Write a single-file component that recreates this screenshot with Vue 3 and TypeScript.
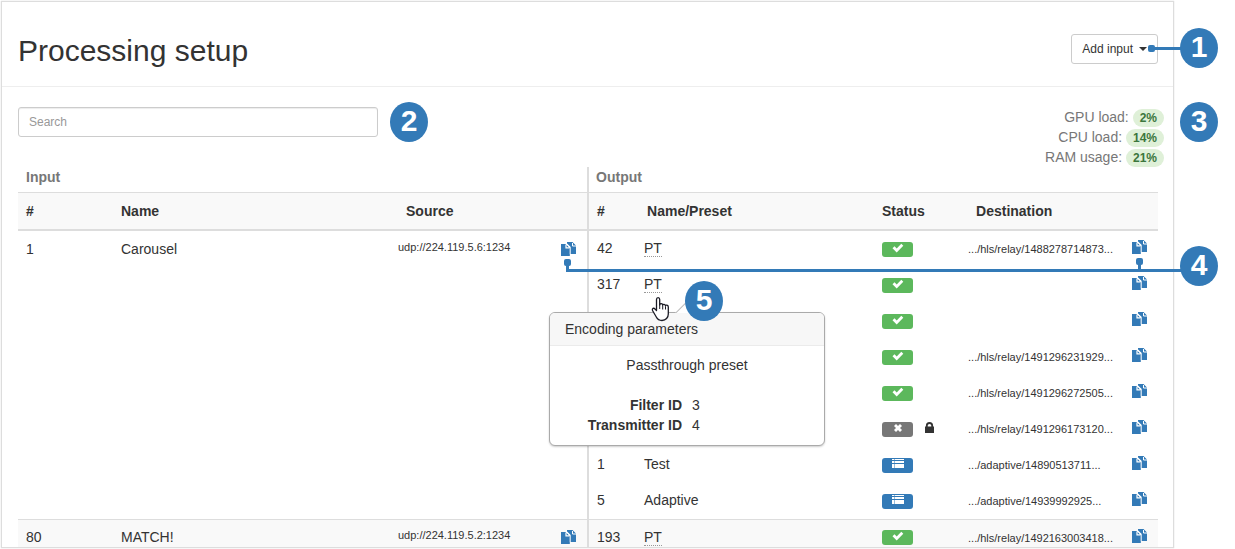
<script setup lang="ts">
import { ref } from 'vue'

type Status = 'ok' | 'off' | 'list'
interface Output { id: number; name: string; preset?: boolean; status: Status; locked?: boolean; dest: string }
interface Input { id: number; name: string; source: string; outputs: Output[] }

const search = ref('')

const loads = [
  { label: 'GPU load:', value: '2%' },
  { label: 'CPU load:', value: '14%' },
  { label: 'RAM usage:', value: '21%' },
]

const inputs: Input[] = [
  {
    id: 1, name: 'Carousel', source: 'udp://224.119.5.6:1234',
    outputs: [
      { id: 42, name: 'PT', preset: true, status: 'ok', dest: '.../hls/relay/1488278714873...' },
      { id: 317, name: 'PT', preset: true, status: 'ok', dest: '' },
      { id: 0, name: '', status: 'ok', dest: '' },
      { id: 0, name: '', status: 'ok', dest: '.../hls/relay/1491296231929...' },
      { id: 0, name: '', status: 'ok', dest: '.../hls/relay/1491296272505...' },
      { id: 0, name: '', status: 'off', locked: true, dest: '.../hls/relay/1491296173120...' },
      { id: 1, name: 'Test', status: 'list', dest: '.../adaptive/14890513711...' },
      { id: 5, name: 'Adaptive', status: 'list', dest: '.../adaptive/14939992925...' },
    ],
  },
  {
    id: 80, name: 'MATCH!', source: 'udp://224.119.5.2:1234',
    outputs: [
      { id: 193, name: 'PT', preset: true, status: 'ok', dest: '.../hls/relay/1492163003418...' },
    ],
  },
]
</script>

<template>
  <div class="page">
    <svg class="defs" aria-hidden="true">
      <symbol id="copy" viewBox="0 0 15 14">
        <path fill="#337ab7" d="M6 0h5.500L15 3.500V12H9.500V5L6 2z" />
        <path fill="none" stroke="#fff" d="M11.500 1v3H15" />
        <path fill="#337ab7" d="M0 2h5l3.800 3.800V14H0z" />
        <path fill="none" stroke="#fff" stroke-width="1.200" d="M5 2.500v3.300h3.500M5.200 1.500l4 4" />
        <path fill="none" stroke="#fff" stroke-width=".6" d="M9.200 5.500V12" />
      </symbol>
    </svg>
    <main class="panel">
      <header class="head">
        <h1>Processing setup</h1>
        <button type="button" class="add">Add input <span class="caret"></span></button>
      </header>

      <div class="tools">
        <input v-model="search" class="search" type="text" placeholder="Search" aria-label="Search" />
        <ul class="loads">
          <li v-for="l in loads" :key="l.label">{{ l.label }} <b>{{ l.value }}</b></li>
        </ul>
      </div>

      <table>
        <colgroup>
          <col class="c-in-id" /><col class="c-in-name" /><col class="c-source" /><col class="c-in-copy" />
          <col class="c-out-id" /><col class="c-out-name" /><col class="c-status" /><col class="c-dest" /><col class="c-out-copy" />
        </colgroup>
        <thead>
          <tr class="groups">
            <th colspan="4">Input</th>
            <th colspan="5" class="split">Output</th>
          </tr>
          <tr class="labels">
            <th>#</th>
            <th>Name</th>
            <th class="indent">Source</th>
            <th></th>
            <th class="split">#</th>
            <th class="nudge">Name/Preset</th>
            <th>Status</th>
            <th class="indent">Destination</th>
            <th></th>
          </tr>
        </thead>
        <tbody v-for="input in inputs" :key="input.id">
          <tr v-for="(o, i) in input.outputs" :key="i">
            <template v-if="i === 0">
              <td :rowspan="input.outputs.length" class="in">{{ input.id }}</td>
              <td :rowspan="input.outputs.length" class="in">{{ input.name }}</td>
              <td :rowspan="input.outputs.length" class="small source">{{ input.source }}</td>
              <td :rowspan="input.outputs.length" class="copy-in">
                <button type="button" class="copy" aria-label="Copy input"><svg><use href="#copy" /></svg></button>
              </td>
            </template>
            <td class="split out">{{ o.id || '' }}</td>
            <td class="out"><span :class="{ preset: o.preset }">{{ o.name }}</span></td>
            <td class="status">
              <div class="state">
                <span class="badge" :class="o.status">
                  <svg viewBox="0 0 12 10">
                    <path v-if="o.status === 'ok'" d="M.5 5.200l2-2 2.200 2.200L9.300.8l2 2L4.700 9.400z" />
                    <path v-else-if="o.status === 'off'" d="M2 3l2-2 2 2 2-2 2 2-2 2 2 2-2 2-2-2-2 2-2-2 2-2z" />
                    <path v-else d="M0 0h2v1H0zM2.500 0H12v1H2.500zM0 2h2v2H0zM2.500 2H12v2H2.500zM0 5h2v4H0zM2.500 5H12v4H2.500z" />
                  </svg>
                </span>
                <svg v-if="o.locked" class="lock" viewBox="0 0 10 12" role="img" aria-label="Locked">
                  <path fill="#333" fill-rule="evenodd" d="M1 5V4a4 4 0 0 1 8 0v1h1v7H0V5zM3 5h4V4a2 2 0 0 0-4 0z" />
                </svg>
              </div>
            </td>
            <td class="small dest">{{ o.dest }}</td>
            <td class="copy-out">
              <button type="button" class="copy" aria-label="Copy output"><svg><use href="#copy" /></svg></button>
            </td>
          </tr>
        </tbody>
      </table>
    </main>

    <section class="popover">
      <h2>Encoding parameters</h2>
      <p>Passthrough preset</p>
      <dl>
        <dt>Filter ID</dt><dd>3</dd>
        <dt>Transmitter ID</dt><dd>4</dd>
      </dl>
    </section>

    <svg class="lines" aria-hidden="true">
      <g fill="none" stroke="#337ab7" stroke-width="3">
        <path d="M1152 48.500H1185M567.500 264V270.500H1185M1139.500 262V270.500" />
      </g>
      <g fill="#337ab7">
        <rect x="1148" y="45" width="7" height="7" rx="2" />
        <rect x="564" y="259" width="7" height="7" rx="2" />
        <rect x="1136" y="258" width="7" height="7" rx="2" />
      </g>
      <path d="M656.500 310.500V299.500c0-2.500 3.200-2.500 3.200 0v5.500c0-1.800 3-1.800 3 .3 0-1.500 2.800-1.300 2.800.7 0-1.500 2.800-1 2.800 1v7c0 3.500-2.500 6.500-6.300 6.500-3 0-4.700-1.500-5.700-3.500l-3.800-6.500c-.7-2 1.200-3 2.500-1.500z" fill="#fff" stroke="#1a1a24" stroke-width="1.300" stroke-linejoin="round" />
      <path d="M659.700 304v5M662.700 305.500v4M665.500 306.500v3" stroke="#1a1a24" fill="none" />
    </svg>
    <span class="mark m1">1</span>
    <span class="mark m2">2</span>
    <span class="mark m3">3</span>
    <span class="mark m4">4</span>
    <span class="mark m5">5</span>
  </div>
</template>

<style>
body { background: #fff; }
</style>

<style scoped>
* { box-sizing: border-box; }
.page {
  position: relative; height: 100vh; overflow: hidden; padding: 1px 61px 1px 1px;
  font: 14px/20px "Liberation Sans", Arial, sans-serif; color: #333;
}
.defs { position: absolute; width: 0; height: 0; }
.panel { height: 100%; overflow: hidden; border: 1px solid #ddd; box-shadow: 0 0 1px #ccc; }
.head {
  display: flex; align-items: center; justify-content: space-between;
  height: 85px; padding: 12px 15px 0 16px; border-bottom: 1px solid #eee;
}
h1 { margin: 0; font-size: 30px; line-height: 33px; font-weight: 400; }
.add {
  display: flex; align-items: center; gap: 6px; height: 30px; padding: 0 10px;
  margin-bottom: 2px; border: 1px solid #ccc; border-radius: 3px; background: #fff;
  font: 12px/18px "Liberation Sans", Arial, sans-serif; color: #333;
}
.caret { border: 4px solid transparent; border-top-color: #333; border-bottom: 0; }
.tools { display: flex; justify-content: space-between; height: 80px; padding: 20px 9px 0 16px; }
.search {
  width: 360px; height: 30px; padding: 0 10px; border: 1px solid #ccc; border-radius: 3px;
  box-shadow: inset 0 1px 1px rgba(0, 0, 0, .075); font: 12px/18px "Liberation Sans", Arial, sans-serif; color: #555;
}
.search::placeholder { color: #999; opacity: 1; }
.loads { margin: 0; padding: 0; list-style: none; text-align: right; color: #777; }
.loads b {
  display: inline-block; padding: 0 7px; border-radius: 9px; background: #dff0d8;
  font-size: 12px; line-height: 18px; color: #3c763d;
}
table { width: calc(100% - 31px); margin-left: 16px; table-layout: fixed; border-collapse: separate; border-spacing: 0; }
.c-in-id { width: 95px; }
.c-in-name { width: 277px; }
.c-source { width: 162px; }
.c-in-copy { width: 35px; }
.c-out-id { width: 49px; }
.c-out-name { width: 238px; }
.c-status { width: 86px; }
.c-dest { width: 164px; }
.c-out-copy { width: 34px; }
th { padding: 0 8px; text-align: left; }
.groups th { height: 26px; padding-bottom: 5px; border-bottom: 1px solid #ddd; color: #777; }
.groups th.split { padding-left: 7px; }
.labels th { height: 38px; background: #f9f9f9; border-bottom: 2px solid #ddd; }
th.indent { padding-left: 16px; }
th.nudge { padding-left: 11px; }
th.split, td.split { border-left: 2px solid #ddd; }
td { height: 36px; padding: 8px 8px 0; vertical-align: top; white-space: nowrap; }
td.out { padding-top: 7px; }
td.small { font-size: 11px; }
td.source { padding-top: 6px; }
td.status { padding-top: 11px; }
td.copy-in { padding-top: 11px; padding-left: 9px; }
td.copy-out { padding-top: 9px; }
tbody + tbody td { border-top: 1px solid #ddd; background: #f9f9f9; }
tbody + tbody .in { padding-top: 7px; }
tbody + tbody .source { padding-top: 5px; }
tbody + tbody .status { padding-top: 10px; }
tbody + tbody .copy-in { padding-top: 10px; }
.preset { display: inline-block; line-height: 16px; border-bottom: 1px dotted #999; }
.state { display: flex; gap: 12px; }
.badge { display: flex; justify-content: center; width: 31px; height: 15px; padding-top: 1px; border-radius: 3px; }
.badge svg { width: 12px; height: 10px; fill: #fff; }
.ok { background: #5cb85c; }
.off { background: #777; }
.list { background: #337ab7; }
.lock { width: 9px; height: 11px; }
.copy { display: block; padding: 0; border: 0; background: none; }
.copy svg { display: block; width: 15px; height: 14px; }
.popover {
  position: absolute; left: 549px; top: 312px; width: 276px; height: 134px;
  border: 1px solid #aaa; border-radius: 6px; background: #fff; box-shadow: 0 1px 2px rgba(0, 0, 0, .2);
}
.popover::before {
  content: ""; position: absolute; left: 129px; top: -9px; width: 16px; height: 16px;
  border: 1px solid #bbb; border-width: 1px 0 0 1px; transform: rotate(45deg); background: #fff;
}
h2 {
  position: relative; margin: 0; height: 33px; padding: 6px 15px; border-bottom: 1px solid #ebebeb;
  border-radius: 5px 5px 0 0; background: #f7f7f7; font-size: 14px; line-height: 20px; font-weight: 400;
}
.popover p { margin: 9px 0 20px; text-align: center; }
dl { display: grid; grid-template-columns: 132px 1fr; column-gap: 10px; margin: 0; }
dt { font-weight: 700; text-align: right; }
dd { margin: 0; }
.lines { position: absolute; left: 0; top: 0; width: 100%; height: 100%; pointer-events: none; }
.mark {
  position: absolute; width: 38px; height: 40px; border-radius: 50%; background: #337ab7;
  color: #fff; font-size: 30px; line-height: 38px; font-weight: 700; text-align: center;
}
.m1 { left: 1180px; top: 28px; }
.m2 { left: 390px; top: 102px; }
.m3 { left: 1180px; top: 102px; }
.m4 { left: 1180px; top: 246px; }
.m5 { left: 685px; top: 281px; }
</style>
